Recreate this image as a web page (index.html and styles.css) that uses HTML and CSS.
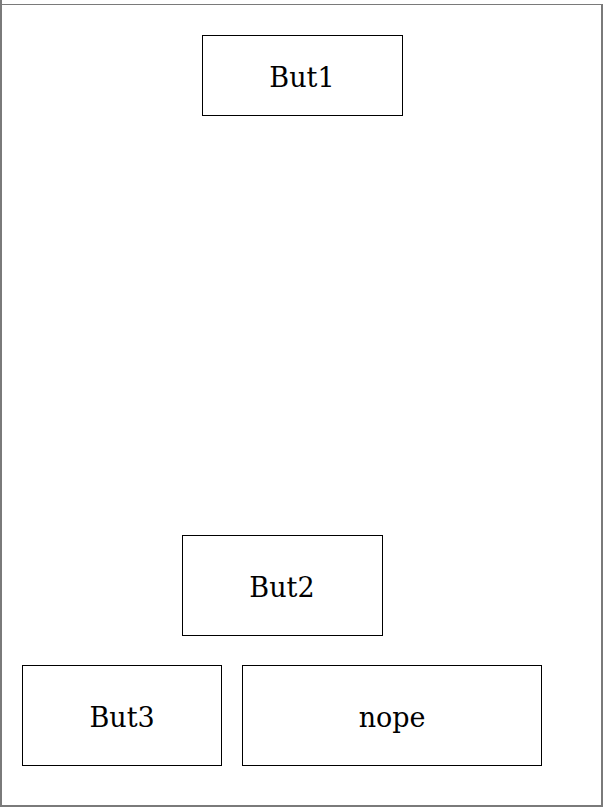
FILE: index.html
```html
<!DOCTYPE html>
<html>
<head>
<meta charset="utf-8">
<link rel="stylesheet" href="styles.css">
</head>
<body>
<div class="window">
  <div class="frame">
    <div class="top">
      <button class="btn btn-short">But1</button>
    </div>
    <div class="bottom">
      <div class="center-row">
        <button class="btn">But2</button>
      </div>
      <div class="row">
        <button class="btn">But3</button>
        <button class="btn btn-wide">nope</button>
      </div>
    </div>
  </div>
</div>
</body>
</html>
```
FILE: styles.css
```css
html, body {
  margin: 0;
  padding: 0;
  background: #ffffff;
}

.window {
  box-sizing: border-box;
  width: 604px;
  height: 807px;
  border-left: 2px solid #7a7a7a;
  padding-top: 4px;
  overflow: hidden;
}

.frame {
  box-sizing: border-box;
  height: 803px;
  margin-right: 1px;
  border-top: 1px solid #7a7a7a;
  border-right: 2px solid #7a7a7a;
  border-bottom: 2px solid #7a7a7a;
  padding: 30px 20px 39px 20px;
  display: flex;
  flex-direction: column;
  justify-content: space-between;
}

.top {
  display: flex;
  justify-content: center;
  padding-left: 1px;
}

.bottom {
  width: 520px;
  display: flex;
  flex-direction: column;
  gap: 29px;
}

.center-row {
  display: flex;
  justify-content: center;
}

.row {
  display: flex;
  gap: 20px;
}

.btn {
  box-sizing: border-box;
  width: 201px;
  height: 101px;
  margin: 0;
  padding: 3px 0 0 0;
  border: 1px solid #000000;
  background: #ffffff;
  color: #000000;
  font-family: "DejaVu Serif", "Liberation Serif", serif;
  font-size: 27px;
  line-height: 1;
  display: flex;
  align-items: center;
  justify-content: center;
}

.btn-short {
  height: 81px;
}

.btn-wide {
  width: 301px;
}
```
